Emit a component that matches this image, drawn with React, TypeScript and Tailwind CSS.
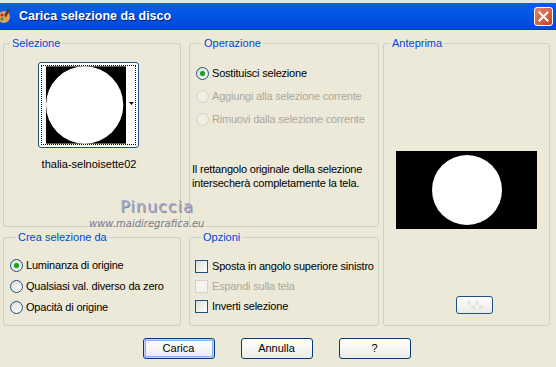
const font = { fontFamily: '"Liberation Sans", Arial, sans-serif' };

function Radio({ checked, disabled, label }: { checked?: boolean; disabled?: boolean; label: string }) {
  return (
    <div className="flex items-center gap-[3px] h-[13px] whitespace-nowrap">
      <span
        className={
          "relative w-[13px] h-[13px] rounded-full border flex items-center justify-center shrink-0 " +
          (disabled ? "border-[#d6d3c4] bg-[#f0eee4]" : "border-[#1c5180] bg-gradient-to-br from-[#dcdcd6] to-white")
        }
      >
        {checked && <span className="w-[5px] h-[5px] rounded-full bg-[#21a121] shadow-[0_0_1px_#6ad36a]" />}
      </span>
      <span className={"text-[11px] leading-[13px] tracking-[-0.2px] " + (disabled ? "text-[#aca899]" : "text-black")}>{label}</span>
    </div>
  );
}

function Check({ disabled, label }: { disabled?: boolean; label: string }) {
  return (
    <div className="flex items-center gap-[4px] h-[13px] whitespace-nowrap">
      <span
        className={
          "w-[13px] h-[13px] border shrink-0 " +
          (disabled ? "border-[#d6d3c4] bg-[#f4f3ee]" : "border-[#1c5180] bg-gradient-to-br from-[#dcdcd6] to-white")
        }
      />
      <span className={"text-[11px] leading-[13px] tracking-[-0.2px] " + (disabled ? "text-[#aca899]" : "text-black")}>{label}</span>
    </div>
  );
}

function Group({ title, className, children }: { title: string; className?: string; children?: React.ReactNode }) {
  return (
    <fieldset className={"border border-[#d0d0bf] rounded-[3px] min-w-0 " + (className ?? "")}>
      <legend className="ml-[6px] px-[2px] text-[11px] leading-[13px] text-[#0046d5]">{title}</legend>
      {children}
    </fieldset>
  );
}

function XpButton({ label, isDefault }: { label: string; isDefault?: boolean }) {
  return (
    <button
      className={
        "w-[72px] h-[21px] rounded-[3px] border border-[#003c74] bg-gradient-to-b from-white to-[#ecebe6] text-[11px] text-black " +
        (isDefault ? "shadow-[inset_0_0_0_1px_#c2d3f6,inset_0_0_0_2px_#8eaff0]" : "")
      }
    >
      {label}
    </button>
  );
}

export default function App() {
  return (
    <div className="w-[556px] h-[367px] bg-[#ece9d8] overflow-hidden flex flex-col relative" style={font}>
      <div className="h-[3px] bg-[#e4e4e4]" />
      <div className="h-[27px] flex items-center bg-gradient-to-b from-[#0a5fe8] via-[#0054e3] to-[#0049d4] border-b border-[#003fb8]">
        <svg width="14" height="16" viewBox="0 0 14 16" className="ml-[-2px]">
          <ellipse cx="6" cy="9" rx="6" ry="6" fill="#e0a060" />
          <circle cx="4" cy="7" r="1.6" fill="#d02020" />
          <circle cx="8" cy="6" r="1.4" fill="#2050d0" />
          <circle cx="4" cy="11" r="1.4" fill="#20a020" />
          <rect x="8" y="1" width="2" height="8" fill="#703010" transform="rotate(25 9 5)" />
        </svg>
        <span className="ml-[7px] text-white font-bold text-[12.5px] [text-shadow:1px_1px_0_#0a1e6e]">
          Carica selezione da disco
        </span>
        <div className="ml-auto mr-[3px] w-[19px] h-[19px] rounded-[3px] border border-white bg-gradient-to-br from-[#e8846a] to-[#c4421f] flex items-center justify-center">
          <svg width="11" height="11" viewBox="0 0 11 11">
            <path d="M1.5 1.5 L9.5 9.5 M9.5 1.5 L1.5 9.5" stroke="white" strokeWidth="2" strokeLinecap="square" />
          </svg>
        </div>
      </div>

      <div className="grid grid-cols-[186px_194px_167px] grid-rows-[190px_95px] gap-y-[4px] mt-[7px] ml-[3px]">
        <Group title="Selezione" className="w-[178px] pb-[6px]">
          <div className="ml-[34px] mt-[12px] w-[101px] h-[86px] rounded-[3px] border border-[#1c5180] bg-white p-[2px]">
            <div className="w-full h-full border border-dotted border-black flex items-center pl-[4px]">
              <svg width="83" height="80" viewBox="0 0 83 80">
                <rect width="83" height="80" fill="black" />
                <circle cx="40" cy="40" r="40" fill="white" />
              </svg>
              <svg width="6" height="4" viewBox="0 0 6 4" className="ml-[3px] mt-[-2px]">
                <path d="M0 0 H5 L2.5 3 Z" fill="black" />
              </svg>
            </div>
          </div>
          <div className="w-[178px] pr-[8px] mt-[10px] text-center text-[11px] leading-[13px] text-black">thalia-selnoisette02</div>
        </Group>

        <Group title="Operazione" className="w-[190px] pl-[6px]">
          <div className="flex flex-col gap-[10px] mt-[17px]">
            <Radio checked label="Sostituisci selezione" />
            <Radio disabled label="Aggiungi alla selezione corrente" />
            <Radio disabled label="Rimuovi dalla selezione corrente" />
          </div>
          <p className="mt-[36px] ml-[-4px] text-[11px] leading-[14px] tracking-[-0.2px] text-black whitespace-nowrap">
            Il rettangolo originale della selezione
            <br />
            intersecherà completamente la tela.
          </p>
        </Group>

        <Group title="Anteprima" className="row-span-2 w-[167px] flex flex-col">
          <div className="mt-[101px] ml-[12px] w-[141px] h-[78px] bg-black flex items-center justify-center">
            <div className="w-[70px] h-[70px] rounded-full bg-white" />
          </div>
          <div className="mt-[67px] ml-[72px] w-[37px] h-[18px] rounded-[3px] border border-[#1c5180] bg-gradient-to-b from-white to-[#ecebe6] flex items-center justify-center">
            <div className="grid grid-cols-4 w-[16px] h-[8px] opacity-40">
              <span className="bg-[#cfcfcf]" /><span /><span className="bg-[#cfcfcf]" /><span />
              <span /><span className="bg-[#cfcfcf]" /><span /><span className="bg-[#cfcfcf]" />
            </div>
          </div>
        </Group>

        <Group title="Crea selezione da" className="w-[178px] pl-[6px]">
          <div className="flex flex-col gap-[8px] mt-[15px]">
            <Radio checked label="Luminanza di origine" />
            <Radio label="Qualsiasi val. diverso da zero" />
            <Radio label="Opacità di origine" />
          </div>
        </Group>

        <Group title="Opzioni" className="w-[190px] pl-[5px]">
          <div className="flex flex-col gap-[7px] mt-[16px]">
            <Check label="Sposta in angolo superiore sinistro" />
            <Check disabled label="Espandi sulla tela" />
            <Check label="Inverti selezione" />
          </div>
        </Group>
      </div>

      <div className="flex justify-center gap-[26px] mt-[12px] pr-[3px]">
        <XpButton isDefault label="Carica" />
        <XpButton label="Annulla" />
        <XpButton label="?" />
      </div>

      <div className="absolute left-[120px] top-[195px] text-[16px] tracking-[1px] text-[#a9a9d6] [text-shadow:1px_1px_0_#8a8a8a]" style={{ fontFamily: '"DejaVu Sans", sans-serif' }}>
        Pinuccia
      </div>
      <div className="absolute left-[89px] top-[216px] text-[10px] italic text-[#7a7a8a]" style={{ fontFamily: '"DejaVu Sans", sans-serif' }}>
        www.maidiregrafica.eu
      </div>
    </div>
  );
}
